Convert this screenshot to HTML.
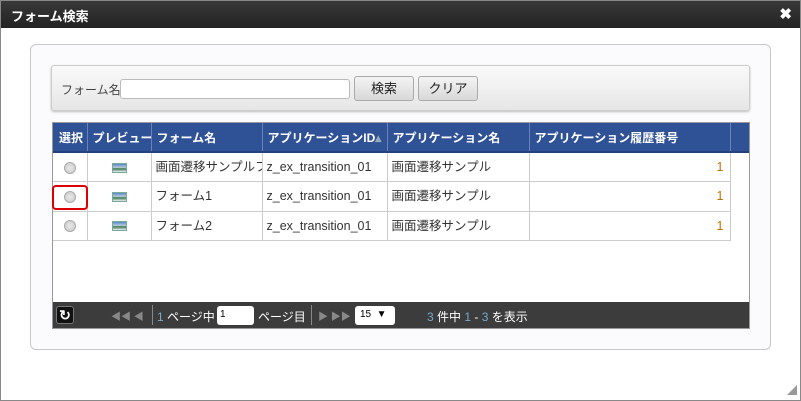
<!DOCTYPE html>
<html><head><meta charset="utf-8"><style>
*{box-sizing:border-box;margin:0;padding:0}
body{width:801px;height:401px;background:#fff;font-family:"Liberation Sans","Noto Sans CJK JP",sans-serif;font-size:12px;color:#333;position:relative;overflow:hidden}
.frame{position:absolute;left:0;top:0;width:801px;height:401px;border:1px solid #888}
.title{position:absolute;left:0;top:0;width:801px;height:28px;background:linear-gradient(#3a3a3a,#222);color:#fff;font-weight:bold;font-size:13px;padding:6px 0 0 11px}
.x{position:absolute;right:9px;top:5px;color:#fff;font-size:15px;font-weight:bold}
.panel{position:absolute;left:30px;top:44px;width:741px;height:306px;border:1px solid #c8c8c8;border-radius:6px;background:#fbfbfd}
.search{position:absolute;left:51px;top:65px;width:699px;height:46px;border:1px solid #ccc;border-radius:3px;background:linear-gradient(#fafafa,#e6e6e6);box-shadow:0 1px 2px #bbb}
.search .lbl{position:absolute;left:9px;top:15px;font-size:12px;color:#444}
.search input{position:absolute;left:68px;top:13px;width:230px;height:20px;border:1px solid #bbb;border-radius:3px;background:#fff}
.btn{position:absolute;top:10px;height:25px;border:1px solid #aaa;border-radius:3px;background:linear-gradient(#f4f4f4,#d8d8d8);font-size:13px;text-align:center;line-height:23px;color:#222}
.grid{position:absolute;left:52px;top:122px;width:698px;height:207px;border:1px solid #999;background:#fff}
table{border-collapse:collapse;position:absolute;left:0;top:0;table-layout:fixed;width:696px}
th{background:#2f5196;color:#fff;font-size:12px;text-align:left;height:29px;padding:0 0 0 5px;border-right:1px solid #6a84bb;border-bottom:2px solid #21407e;font-weight:bold;white-space:nowrap;overflow:hidden;vertical-align:middle}
td{height:29.5px;border-right:1px solid #ccc;border-bottom:1px solid #ccc;font-size:12.5px;padding:0 0 0 4px;white-space:nowrap;overflow:hidden;vertical-align:middle;line-height:14px}
.r{display:inline-block;width:12px;height:12px;border-radius:50%;background:radial-gradient(#e8e8e8,#c8c8c8);border:1px solid #aaa;vertical-align:middle}
.im{display:inline-block;width:15px;height:10px;border:1px solid #7a9;background:linear-gradient(#5a8ac8 0,#bcd 45%,#3a7a4a 60%,#eef 100%);vertical-align:middle}
.foot{position:absolute;left:0;top:179px;width:696px;height:26px;background:#3c3c3c;color:#fff;font-size:12px}
.hl{position:absolute;left:52px;top:185px;width:36px;height:25px;border:2px solid #d00;border-radius:4px}
</style></head><body>
<div class="title">フォーム検索</div><div class="x">✖</div>
<div class="panel"></div>
<div class="search"><span class="lbl">フォーム名</span><input><div class="btn" style="left:302px;width:60px">検索</div><div class="btn" style="left:366px;width:60px">クリア</div></div>
<div class="grid">
<table>
<colgroup><col style="width:34px"><col style="width:64px"><col style="width:111px"><col style="width:125px"><col style="width:142px"><col style="width:201px"><col style="width:19px"></colgroup>
<tr><th style="padding-left:6px">選択</th><th>プレビュー</th><th>フォーム名</th><th>アプリケーションID<span style="color:#9ab">▴</span></th><th>アプリケーション名</th><th>アプリケーション履歴番号</th><th style="border-right:none"></th></tr>
<tr><td style="text-align:center;padding:0"><span class="r"></span></td><td style="text-align:center;padding:0"><span class="im"></span></td><td>画面遷移サンプルフォ</td><td>z_ex_transition_01</td><td>画面遷移サンプル</td><td style="text-align:right;padding-right:6px;color:#c07000">1</td><td style="border:none"></td></tr>
<tr><td style="text-align:center;padding:0"><span class="r"></span></td><td style="text-align:center;padding:0"><span class="im"></span></td><td>フォーム1</td><td>z_ex_transition_01</td><td>画面遷移サンプル</td><td style="text-align:right;padding-right:6px;color:#c07000">1</td><td style="border:none"></td></tr>
<tr><td style="text-align:center;padding:0"><span class="r"></span></td><td style="text-align:center;padding:0"><span class="im"></span></td><td>フォーム2</td><td>z_ex_transition_01</td><td>画面遷移サンプル</td><td style="text-align:right;padding-right:6px;color:#c07000">1</td><td style="border:none"></td></tr>
</table>
<div class="foot">
<div style="position:absolute;left:3px;top:4px;width:18px;height:18px;background:#111;border:1px solid #777;border-radius:3px;color:#fff;font-weight:bold;font-size:14px;text-align:center;line-height:16px">↻</div>
<span style="position:absolute;left:58px;top:6px;color:#888;font-size:10px">◀◀ ◀</span>
<span style="position:absolute;left:99px;top:3px;width:1px;height:20px;background:#888"></span>
<span style="position:absolute;left:104px;top:6px"><b style="color:#7ac;font-weight:normal">1</b> ページ中</span>
<span style="position:absolute;left:164px;top:4px;width:37px;height:19px;background:#fff;border-radius:3px;color:#000;font-size:10px;padding:3px 3px">1</span>
<span style="position:absolute;left:205px;top:6px">ページ目</span>
<span style="position:absolute;left:258px;top:3px;width:1px;height:20px;background:#888"></span>
<span style="position:absolute;left:265px;top:6px;color:#888;font-size:10px">▶ ▶▶</span>
<span style="position:absolute;left:302px;top:4px;width:40px;height:19px;background:#fff;border-radius:3px;color:#000;font-size:10px;padding:3px 5px">15 &nbsp;▼</span>
<span style="position:absolute;left:374px;top:6px"><b style="color:#7ac;font-weight:normal">3</b> 件中 <b style="color:#7ac;font-weight:normal">1</b> - <b style="color:#7ac;font-weight:normal">3</b> を表示</span>
</div>
</div>
<div class="hl"></div>
<div style="position:absolute;right:4px;bottom:4px;color:#999;font-size:10px">◢</div>
<div class="frame"></div>
</body></html>
